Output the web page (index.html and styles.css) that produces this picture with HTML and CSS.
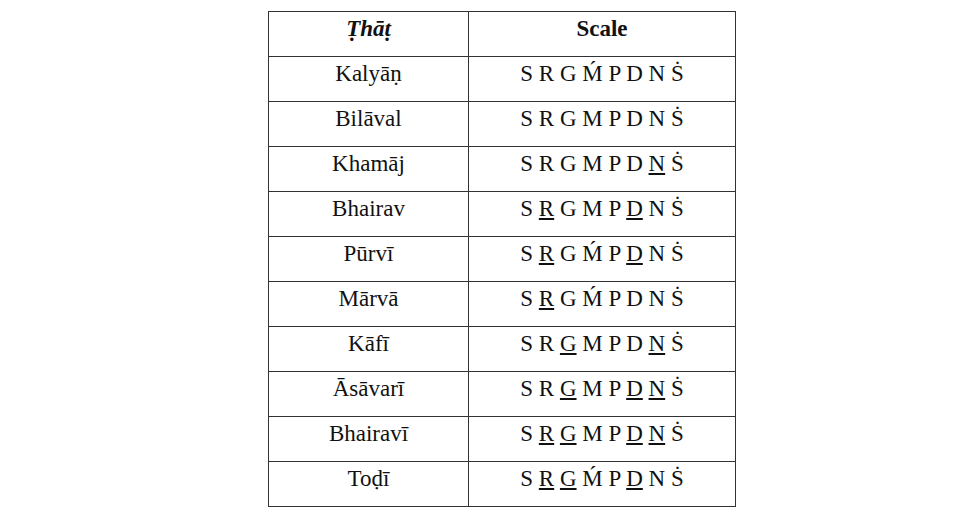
FILE: index.html
```html
<!DOCTYPE html>
<html>
<head>
<meta charset="utf-8">
<link rel="stylesheet" href="styles.css">
</head>
<body>
<table class="that-table">
  <thead>
    <tr><th class="col-that"><em>Ṭhāṭ</em></th><th class="col-scale">Scale</th></tr>
  </thead>
  <tbody>
    <tr><td>Kalyāṇ</td><td>S R G Ḿ P D N Ṡ</td></tr>
    <tr><td>Bilāval</td><td>S R G M P D N Ṡ</td></tr>
    <tr><td>Khamāj</td><td>S R G M P D <u>N</u> Ṡ</td></tr>
    <tr><td>Bhairav</td><td>S <u>R</u> G M P <u>D</u> N Ṡ</td></tr>
    <tr><td>Pūrvī</td><td>S <u>R</u> G Ḿ P <u>D</u> N Ṡ</td></tr>
    <tr><td>Mārvā</td><td>S <u>R</u> G Ḿ P D N Ṡ</td></tr>
    <tr><td>Kāfī</td><td>S R <u>G</u> M P D <u>N</u> Ṡ</td></tr>
    <tr><td>Āsāvarī</td><td>S R <u>G</u> M P <u>D</u> <u>N</u> Ṡ</td></tr>
    <tr><td>Bhairavī</td><td>S <u>R</u> <u>G</u> M P <u>D</u> <u>N</u> Ṡ</td></tr>
    <tr><td>Toḍī</td><td>S <u>R</u> <u>G</u> Ḿ P <u>D</u> N Ṡ</td></tr>
  </tbody>
</table>
</body>
</html>
```
FILE: styles.css
```css
html, body {
  margin: 0;
  padding: 0;
  background: #ffffff;
}
body {
  padding-top: 11px;
  font-family: "Liberation Serif", "DejaVu Serif", serif;
  color: #111;
}
.that-table {
  margin-left: 268px;
  border-collapse: collapse;
  width: 468px;
  table-layout: fixed;
}
.that-table th,
.that-table td {
  border: 1.5px solid #333333;
  height: 45px;
  box-sizing: border-box;
  padding: 3px 0 0 0;
  vertical-align: top;
  text-align: center;
  font-size: 23px;
  line-height: 27px;
  font-weight: normal;
}
.that-table th {
  font-weight: bold;
}
.col-that {
  width: 200px;
}
.that-table u {
  text-decoration-thickness: 1.5px;
  text-underline-offset: 2px;
}
```
